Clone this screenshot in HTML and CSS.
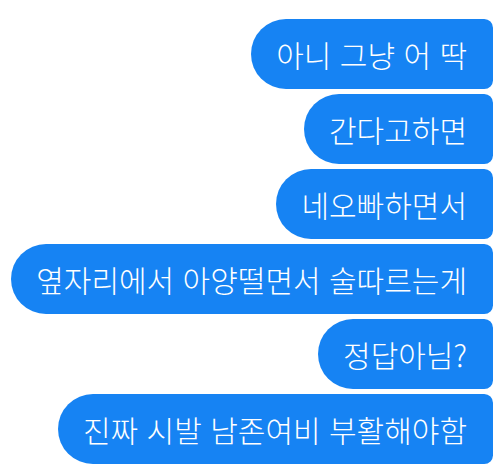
FILE: index.html
```html
<!DOCTYPE html>
<html lang="ko">
  <head>
    <meta charset="UTF-8" />
    <title>Chat</title>
    <link rel="stylesheet" href="styles.css">
  </head>
  <body>
    <div class="thread">
      <div class="bubble">아니 그냥 어 딱</div>
      <div class="bubble">간다고하면</div>
      <div class="bubble">네오빠하면서</div>
      <div class="bubble">옆자리에서 아양떨면서 술따르는게</div>
      <div class="bubble">정답아님?</div>
      <div class="bubble">진짜 시발 남존여비 부활해야함</div>
    </div>
  </body>
</html>
```

FILE: styles.css
```css
html {
  background: #fff;
}

body {
  margin: 0px;
}

.thread {
  gap: 5px;
  display: flex;
  flex-flow: column;
  align-items: flex-end;
  padding: 19px 7px 0px 0px;
}

.bubble {
  color: #fff;
  height: 70px;
  padding: 0px 26px 0px 25px;
  line-height: 70px;
  font-size: 30px;
  font-weight: 300;
  font-family: "Noto Sans CJK KR", "Noto Sans", sans-serif;
  white-space: nowrap;
  background-color: #1683f3;
  border-radius: 36px 9px 9px 36px;
}
```
